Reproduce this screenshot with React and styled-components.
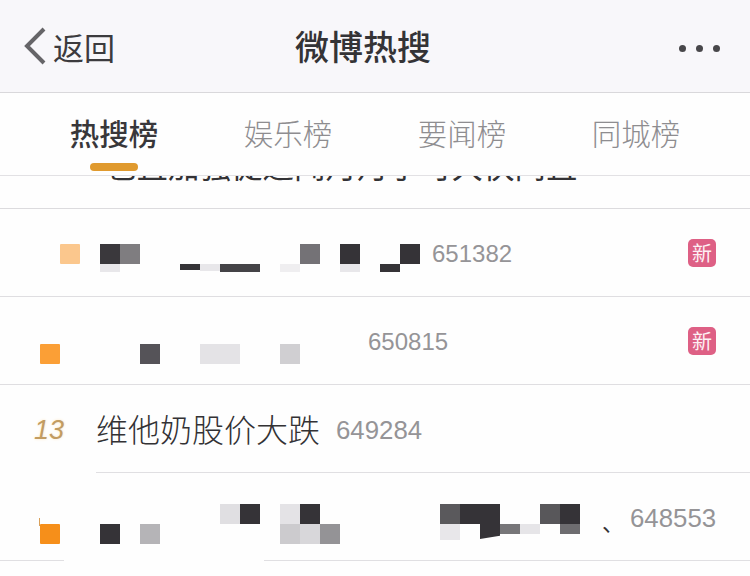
import React from 'react'
import styled, { createGlobalStyle } from 'styled-components'

const cjk = `"Noto Sans CJK SC", "Liberation Sans", sans-serif`

const GlobalStyle = createGlobalStyle`
  html, body {
    margin: 0;
    padding: 0;
    background: #fefefe;
  }
  body {
    font-family: ${cjk};
    overflow: hidden;
  }
`

const Page = styled.div`
  width: 750px;
  height: 576px;
  overflow: hidden;
`

const Header = styled.header`
  display: flex;
  align-items: center;
  height: 92px;
  background: #f8f7fa;
  border-bottom: 1px solid #d9d8db;
`

const Back = styled.div`
  display: flex;
  align-items: center;
  gap: 7px;
  width: 295px;
  box-sizing: border-box;
  padding-left: 24px;
  font-size: 31px;
  font-weight: 400;
  color: #3c3b3e;
`

const Title = styled.h1`
  margin: 0;
  font-size: 34px;
  font-weight: 500;
  line-height: 44px;
  color: #343336;
`

const More = styled.div`
  display: flex;
  gap: 10px;
  margin: 4px 0 0 auto;
  padding-right: 30px;
`

const Dot = styled.span`
  width: 7px;
  height: 7px;
  border-radius: 50%;
  background: #48474a;
`

const Tabs = styled.nav`
  display: flex;
  height: 82px;
  padding-left: 27px;
  border-bottom: 1px solid #e2e1e4;
`

const Tab = styled.div`
  display: flex;
  flex-direction: column;
  align-items: center;
  width: 174px;
  padding-top: 22px;
  font-size: 29.5px;
  line-height: 34px;
  font-weight: ${p => (p.$active ? 500 : 300)};
  color: ${p => (p.$active ? '#38373a' : '#8e8d90')};
`

const TabMark = styled.span`
  width: 48px;
  height: 8px;
  margin-top: 14px;
  border-radius: 4px;
  background: #e09a2e;
`

const ClippedRow = styled.div`
  height: 32px;
  overflow: hidden;
  padding-left: 105px;
  border-bottom: 1px solid #dcdbde;
`

const ClippedText = styled.div`
  margin-top: -28px;
  font-size: 31.5px;
  line-height: 32px;
  white-space: nowrap;
  color: #333235;
`

const Row = styled.div`
  display: flex;
  align-items: flex-start;
  height: 87px;
  border-bottom: 1px solid #dfdee1;
`

const PlainRow = styled(Row)`
  border-bottom: none;
`

const Rule = styled.div`
  height: 1px;
  margin-left: ${p => p.$inset || 0}px;
  background: #e0dfe2;
`

const GappedRule = styled.div`
  height: 1px;
  background: linear-gradient(to right, #e0dfe2 64px, transparent 64px, transparent 264px, #e0dfe2 264px);
`

const Rank = styled.div`
  flex: none;
  width: 100px;
  height: 100%;
`

const Marker = styled.span`
  position: relative;
  display: block;
  width: 20px;
  height: 20px;
  margin-left: ${p => p.$left}px;
  margin-top: ${p => p.$top}px;
  border-radius: 1px;
  background: ${p => p.$color};
  filter: blur(0.4px);

  &::before {
    content: '';
    display: ${p => (p.$notch ? 'block' : 'none')};
    position: absolute;
    left: -1px;
    top: -6px;
    width: 1px;
    height: 8px;
    background: #d9a05a;
  }
`

const RankNumber = styled.span`
  display: block;
  margin: 30px 0 0 34px;
  font-family: "Liberation Sans", sans-serif;
  font-size: 27px;
  line-height: 30px;
  font-style: italic;
  color: #c29c62;
  text-shadow: 0 0 3px #fbe6c4;
`

const Mosaic = styled.div`
  flex: none;
  display: grid;
  grid-template-columns: repeat(${p => p.$cols}, 20px);
  grid-auto-rows: 20px;
  margin-top: ${p => p.$top}px;
`

const Cell = styled.span`
  grid-column: ${p => p.$col} / span ${p => p.$span || 1};
  grid-row: ${p => p.$row || 1};
  height: ${p => p.$h || 20}px;
  background: ${p => p.$color};
  filter: ${p => (p.$soft ? 'blur(0.6px)' : 'none')};
  clip-path: ${p => (p.$cut ? 'polygon(0 0, 100% 0, 100% 78%, 0 100%)' : 'none')};
`

const Headline = styled.span`
  margin: 27px 0 0 -4px;
  font-size: 32px;
  line-height: 32px;
  font-weight: 300;
  white-space: nowrap;
  color: #333235;
`

const Count = styled.span`
  margin-top: 31px;
  margin-left: ${p => p.$left}px;
  font-family: "Liberation Sans", sans-serif;
  font-size: ${p => p.$size || 24}px;
  line-height: 28px;
  color: #959497;
`

const Pause = styled.span`
  margin: 37px 0 0 22px;
  font-size: 22px;
  line-height: 22px;
  color: #333235;
`

const NewBadge = styled.span`
  display: flex;
  align-items: center;
  justify-content: center;
  flex: none;
  width: 28px;
  height: 28px;
  margin: 30px 34px 0 auto;
  border-radius: 5px;
  background: #de6085;
  font-size: 20px;
  line-height: 28px;
  color: #fdf0f4;
`

const DARK = '#353337'
const LIGHT = '#e8e7ea'

const firstRow = [
  { col: 1, color: '#3a383c' },
  { col: 2, color: '#7f7d80' },
  { col: 1, row: 2, h: 8, color: LIGHT, soft: true },
  { col: 5, row: 2, h: 6, color: DARK },
  { col: 6, row: 2, h: 7, color: LIGHT, soft: true },
  { col: 7, span: 2, row: 2, h: 8, color: '#444347' },
  { col: 10, row: 2, h: 8, color: '#efeef0', soft: true },
  { col: 11, color: '#747276' },
  { col: 13, color: DARK },
  { col: 13, row: 2, h: 8, color: LIGHT, soft: true },
  { col: 15, row: 2, h: 8, color: DARK },
  { col: 16, color: DARK }
]

const secondRow = [
  { col: 3, color: '#555358' },
  { col: 6, span: 2, color: '#e4e3e6', soft: true },
  { col: 10, color: '#d0cfd2', soft: true }
]

const fourthRow = [
  { col: 1, row: 2, color: DARK },
  { col: 3, row: 2, color: '#b5b4b7', soft: true },
  { col: 7, color: '#e0dfe2', soft: true },
  { col: 8, color: DARK },
  { col: 10, color: '#e4e3e6', soft: true },
  { col: 11, color: DARK },
  { col: 10, row: 2, color: '#cccbce', soft: true },
  { col: 11, row: 2, color: '#d8d7da', soft: true },
  { col: 12, row: 2, color: '#949396' },
  { col: 18, color: '#5a595c' },
  { col: 19, span: 2, color: DARK },
  { col: 18, row: 2, h: 16, color: LIGHT, soft: true },
  { col: 20, row: 2, h: 15, color: DARK, cut: true },
  { col: 21, row: 2, h: 10, color: '#777679' },
  { col: 22, row: 2, h: 10, color: '#e6e5e8', soft: true },
  { col: 23, color: '#58575a' },
  { col: 24, color: DARK },
  { col: 24, row: 2, h: 10, color: '#6e6d70' }
]

const Blocks = ({ cols, top, cells }) => (
  <Mosaic $cols={cols} $top={top}>
    {cells.map(c => (
      <Cell
        key={`${c.col}-${c.row || 1}`}
        $col={c.col}
        $span={c.span}
        $row={c.row}
        $h={c.h}
        $color={c.color}
        $soft={c.soft}
        $cut={c.cut}
      />
    ))}
  </Mosaic>
)

const tabs = ['热搜榜', '娱乐榜', '要闻榜', '同城榜']

const App = () => {
  return (
    <Page>
      <GlobalStyle />
      <Header>
        <Back>
          <svg width='22' height='38' viewBox='0 0 22 38' fill='none'>
            <path d='M20 2 L3 19 L20 36' stroke='#666568' strokeWidth='4' />
          </svg>
          返回
        </Back>
        <Title>微博热搜</Title>
        <More>
          <Dot />
          <Dot />
          <Dot />
        </More>
      </Header>
      <Tabs>
        {tabs.map((t, i) => (
          <Tab key={t} $active={i === 0}>
            {t}
            {i === 0 && <TabMark />}
          </Tab>
        ))}
      </Tabs>
      <ClippedRow>
        <ClippedText>也且加强促进闻月月了可大快问且</ClippedText>
      </ClippedRow>
      <Row>
        <Rank>
          <Marker $left={60} $top={35} $color='#fbc78d' />
        </Rank>
        <Blocks cols={16} top={35} cells={firstRow} />
        <Count $left={12}>651382</Count>
        <NewBadge>新</NewBadge>
      </Row>
      <Row>
        <Rank>
          <Marker $left={40} $top={47} $color='#fb9f36' />
        </Rank>
        <Blocks cols={10} top={47} cells={secondRow} />
        <Count $left={68}>650815</Count>
        <NewBadge>新</NewBadge>
      </Row>
      <PlainRow>
        <Rank>
          <RankNumber>13</RankNumber>
        </Rank>
        <Headline>维他奶股价大跌</Headline>
        <Count $left={16} $size={25.8}>649284</Count>
      </PlainRow>
      <Rule $inset={96} />
      <PlainRow>
        <Rank>
          <Marker $left={40} $top={51} $color='#f68f1a' $notch />
        </Rank>
        <Blocks cols={24} top={31} cells={fourthRow} />
        <Pause>、</Pause>
        <Count $left={6} $size={25.8}>648553</Count>
      </PlainRow>
      <GappedRule />
    </Page>
  )
}

export default App
